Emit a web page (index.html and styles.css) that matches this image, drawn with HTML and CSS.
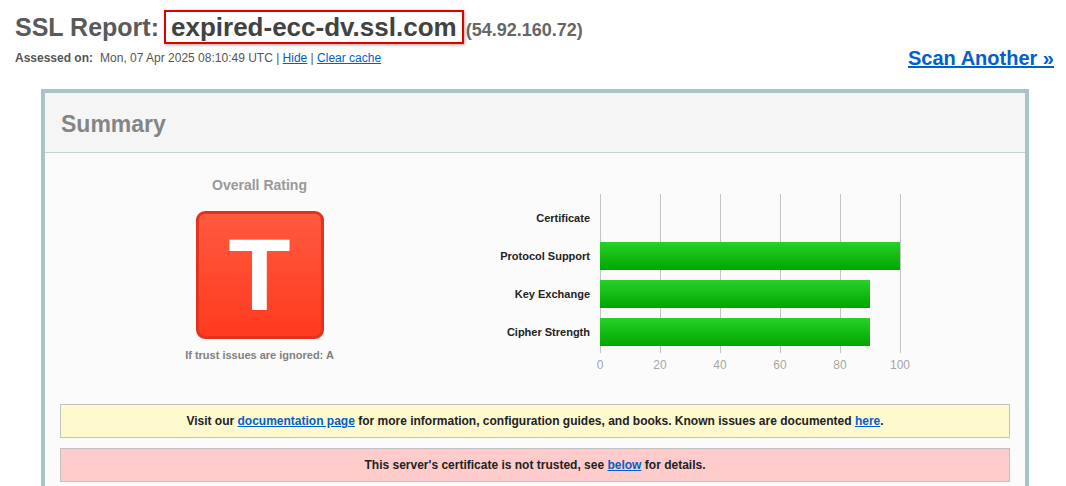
FILE: index.html
```html
<!DOCTYPE html>
<html lang="en">
<head>
<meta charset="utf-8">
<title>SSL Report: expired-ecc-dv.ssl.com</title>
<link rel="stylesheet" href="styles.css">
</head>
<body>
<div class="page">
  <div class="top">
    <div class="title-block">
      <h1 class="title"><span class="prefix">SSL Report:</span><span class="host">expired-ecc-dv.ssl.com</span><span class="ip">(54.92.160.72)</span></h1>
      <div class="assessed"><b>Assessed on:</b><span class="date">Mon, 07 Apr 2025 08:10:49 UTC | <a href="#">Hide</a> | <a href="#">Clear cache</a></span></div>
    </div>
    <a class="scan" href="#">Scan Another &raquo;</a>
  </div>

  <div class="report">
    <div class="report-head">Summary</div>
    <div class="report-body">
      <div class="summary-row">
        <div class="rating-col">
          <div class="rating-title">Overall Rating</div>
          <div class="grade">T</div>
          <div class="rating-note">If trust issues are ignored: A</div>
        </div>
        <div class="chart-col">
          <div class="chart">
            <div class="labels">
              <div class="label">Certificate</div>
              <div class="label">Protocol Support</div>
              <div class="label">Key Exchange</div>
              <div class="label">Cipher Strength</div>
            </div>
            <div class="plot">
              <div class="bar" style="width:0px"></div>
              <div class="bar" style="width:300px"></div>
              <div class="bar" style="width:270px"></div>
              <div class="bar" style="width:270px"></div>
            </div>
          </div>
          <div class="axis">
            <span>0</span><span>20</span><span>40</span><span>60</span><span>80</span><span>100</span>
          </div>
        </div>
      </div>
      <div class="notice notice-info">Visit our <a href="#">documentation page</a> for more information, configuration guides, and books. Known issues are documented <a href="#">here</a>.</div>
      <div class="notice notice-error">This server's certificate is not trusted, see <a href="#">below</a> for details.</div>
    </div>
  </div>
</div>
</body>
</html>
```

FILE: styles.css
```css
html, body {
  margin: 0;
  padding: 0;
  background: #ffffff;
}

body {
  font-family: "Liberation Sans", Arial, sans-serif;
  color: #222;
}

a {
  color: #0060cc;
  text-decoration: underline;
}

.page {
  padding: 0 12px 0 15px;
}

.top {
  display: flex;
  justify-content: space-between;
  align-items: flex-start;
}

.title {
  margin: 12px 0 0 0;
  font-size: 26px;
  line-height: 30px;
  font-weight: bold;
  color: #5a5a5a;
  white-space: nowrap;
}

.prefix {
  font-size: 25px;
}

.host {
  margin-left: 5px;
  color: #424242;
  border: 2px solid #e00000;
  padding: 0 5px;
  box-shadow: 1px 1px 3px rgba(0, 0, 0, 0.35);
}

.ip {
  margin-left: 2px;
  font-size: 18px;
  color: #666;
}

.assessed {
  margin-top: 5px;
  font-size: 12px;
  line-height: 16px;
  color: #555;
}

.assessed .date {
  margin-left: 7px;
}

.scan {
  margin-top: 48px;
  font-size: 20px;
  line-height: 20px;
  font-weight: bold;
  color: #0060cc;
}

.report {
  width: 988px;
  box-sizing: border-box;
  margin: 21px 0 0 26px;
  border: 4px solid #a8c4c6;
  background: #fbfbfb;
}

.report-head {
  background: #f5f5f5;
  border-bottom: 1px solid #c6d2d2;
  padding: 18px 16px 15px;
  font-size: 23px;
  line-height: 26px;
  font-weight: bold;
  color: #858585;
}

.report-body {
  padding: 23px 15px 20px;
}

.summary-row {
  display: flex;
  align-items: flex-start;
}

.rating-col {
  width: 399px;
  display: flex;
  flex-direction: column;
  align-items: center;
}

.rating-title {
  font-size: 14px;
  line-height: 18px;
  font-weight: bold;
  color: #999;
}

.grade {
  margin-top: 17px;
  width: 128px;
  height: 128px;
  box-sizing: border-box;
  border: 3px solid #e5321c;
  border-radius: 9px;
  background: linear-gradient(to bottom, #ff5a3f, #ff3a1f);
  color: #fff;
  font-size: 102px;
  line-height: 122px;
  font-weight: bold;
  text-align: center;
}

.rating-note {
  margin-top: 9px;
  font-size: 11px;
  line-height: 14px;
  font-weight: bold;
  color: #808080;
}

.chart-col {
  margin-top: 18px;
}

.chart {
  display: flex;
  gap: 10px;
}

.labels {
  width: 131px;
  padding: 10px 0 7px;
  display: flex;
  flex-direction: column;
  gap: 10px;
}

.label {
  height: 28px;
  line-height: 28px;
  text-align: right;
  font-size: 11px;
  font-weight: bold;
  color: #222;
  white-space: nowrap;
}

.plot {
  width: 301px;
  padding: 10px 0 7px;
  display: flex;
  flex-direction: column;
  gap: 10px;
  background-image: linear-gradient(to right, #c4c4c4 0, #c4c4c4 1px, transparent 1px);
  background-size: 60px 100%;
  background-repeat: repeat-x;
}

.bar {
  height: 28px;
  background: linear-gradient(to bottom, #27d127, #00a600);
}

.axis {
  display: flex;
  margin: 5px 0 0 111px;
}

.axis span {
  width: 60px;
  text-align: center;
  font-size: 12px;
  line-height: 14px;
  color: #a6a6a6;
}

.notice {
  height: 34px;
  box-sizing: border-box;
  border: 1px solid #c2c2c2;
  text-align: center;
  font-size: 12px;
  line-height: 32px;
  font-weight: bold;
  color: #222;
}

.notice-info {
  margin-top: 32px;
  background: #fff9cf;
}

.notice-error {
  margin-top: 10px;
  background: #ffcbcb;
}
```
